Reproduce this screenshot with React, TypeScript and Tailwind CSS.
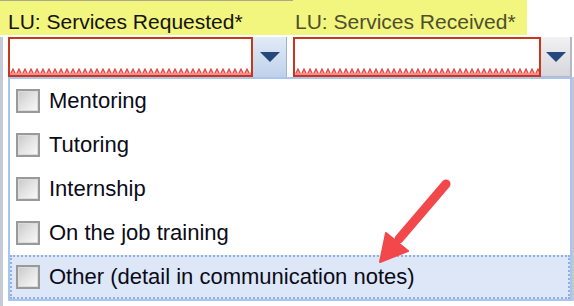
import React from 'react'

const items = [
  'Mentoring',
  'Tutoring',
  'Internship',
  'On the job training',
  'Other (detail in communication notes)',
]

function Zigzag() {
  return (
    <svg className="block w-full h-[7px]" preserveAspectRatio="none">
      <defs>
        <pattern id="zz" width="6" height="7" patternUnits="userSpaceOnUse">
          <rect x="0" y="0" width="6" height="7" fill="#ffffff" />
          <path d="M0 7 L3 1 L6 7 Z" fill="#f7a3a3" stroke="#e2403a" strokeWidth="1.2" />
          <rect x="0" y="5" width="6" height="2" fill="#f38e8e" />
        </pattern>
      </defs>
      <rect width="100%" height="7" fill="url(#zz)" />
    </svg>
  )
}

function ComboInput({ width }: { width: string }) {
  return (
    <div className={`${width} border-2 border-[#c8361c] bg-white flex flex-col justify-end`}>
      <Zigzag />
    </div>
  )
}

function Caret() {
  return (
    <svg width="20" height="10" viewBox="0 0 20 10">
      <path d="M0 0 H20 L10 10 Z" fill="#25487f" />
    </svg>
  )
}

function Checkbox() {
  return (
    <div className="w-6 h-6 border-2 border-[#999999] bg-linear-to-br from-[#c8c8c8] via-[#e4e4e4] to-[#fafafa] shadow-[inset_0_0_0_1px_#dcdcdc] shrink-0" />
  )
}

export default function App() {
  return (
    <div className="w-[574px] h-[306px] relative overflow-hidden bg-white flex flex-col font-['Liberation_Sans',Arial,sans-serif]">
      {/* labels */}
      <div className="flex h-[35px] shrink-0">
        <div className="w-[293px] bg-[#f2f57e] border-t border-[#aaa98a] pl-2 pt-[8px] flex items-center text-[21px] text-[#141414]">
          LU: Services Requested*
        </div>
        <div className="w-[234px] bg-[#f2f57e] pl-[2px] pt-[8px] flex items-center text-[21px] text-[#4f4f2e]">
          LU: Services Received*
        </div>
      </div>

      <div className="flex flex-1 mt-[2px]">
        <div className="w-[3px] bg-[#c6cad6]" />
        <div className="flex-1 flex flex-col">
          {/* inputs */}
          <div className="flex h-10 pl-[5px]">
            <ComboInput width="w-[245px]" />
            <div className="w-[34px] bg-linear-to-b from-[#e2ebf7] to-[#bfd1ea] border-r border-[#9fb3d2] flex items-center justify-center">
              <Caret />
            </div>
            <div className="w-[6px]" />
            <ComboInput width="w-[248px]" />
            <div className="w-[31px] bg-linear-to-b from-[#f2f2f4] to-[#d6d6dc] border-r-2 border-b border-[#b8b8c2] flex items-center justify-center">
              <Caret />
            </div>
          </div>

          {/* dropdown list */}
          <div className="flex">
            <div className="ml-[5px] w-[564px] h-[224px] border-2 border-[#a9c4ee] bg-white flex flex-col">
              {items.map((label, i) => {
                const active = i === items.length - 1
                return (
                  <div
                    key={label}
                    className={
                      active
                        ? 'h-[44px] flex items-center gap-[9px] pl-[4px] bg-[#dde7f7] border-2 border-dotted border-[#8eaee6]'
                        : 'h-[44px] flex items-center gap-[9px] pl-[6px]'
                    }
                  >
                    <Checkbox />
                    <span className="text-[22px] text-[#0b0b18] leading-none">{label}</span>
                  </div>
                )
              })}
            </div>
            <div className="w-[2px] bg-[#c4c7cf]" />
          </div>
        </div>
      </div>

      {/* annotation arrow */}
      <svg className="absolute inset-0 pointer-events-none" width="574" height="306">
        <line x1="446" y1="184" x2="399" y2="239" stroke="#f2474b" strokeWidth="9" strokeLinecap="round" />
        <path d="M380 262 L386 233 L408 251 Z" fill="#f2474b" stroke="#f2474b" strokeWidth="2" strokeLinejoin="round" />
      </svg>
    </div>
  )
}
